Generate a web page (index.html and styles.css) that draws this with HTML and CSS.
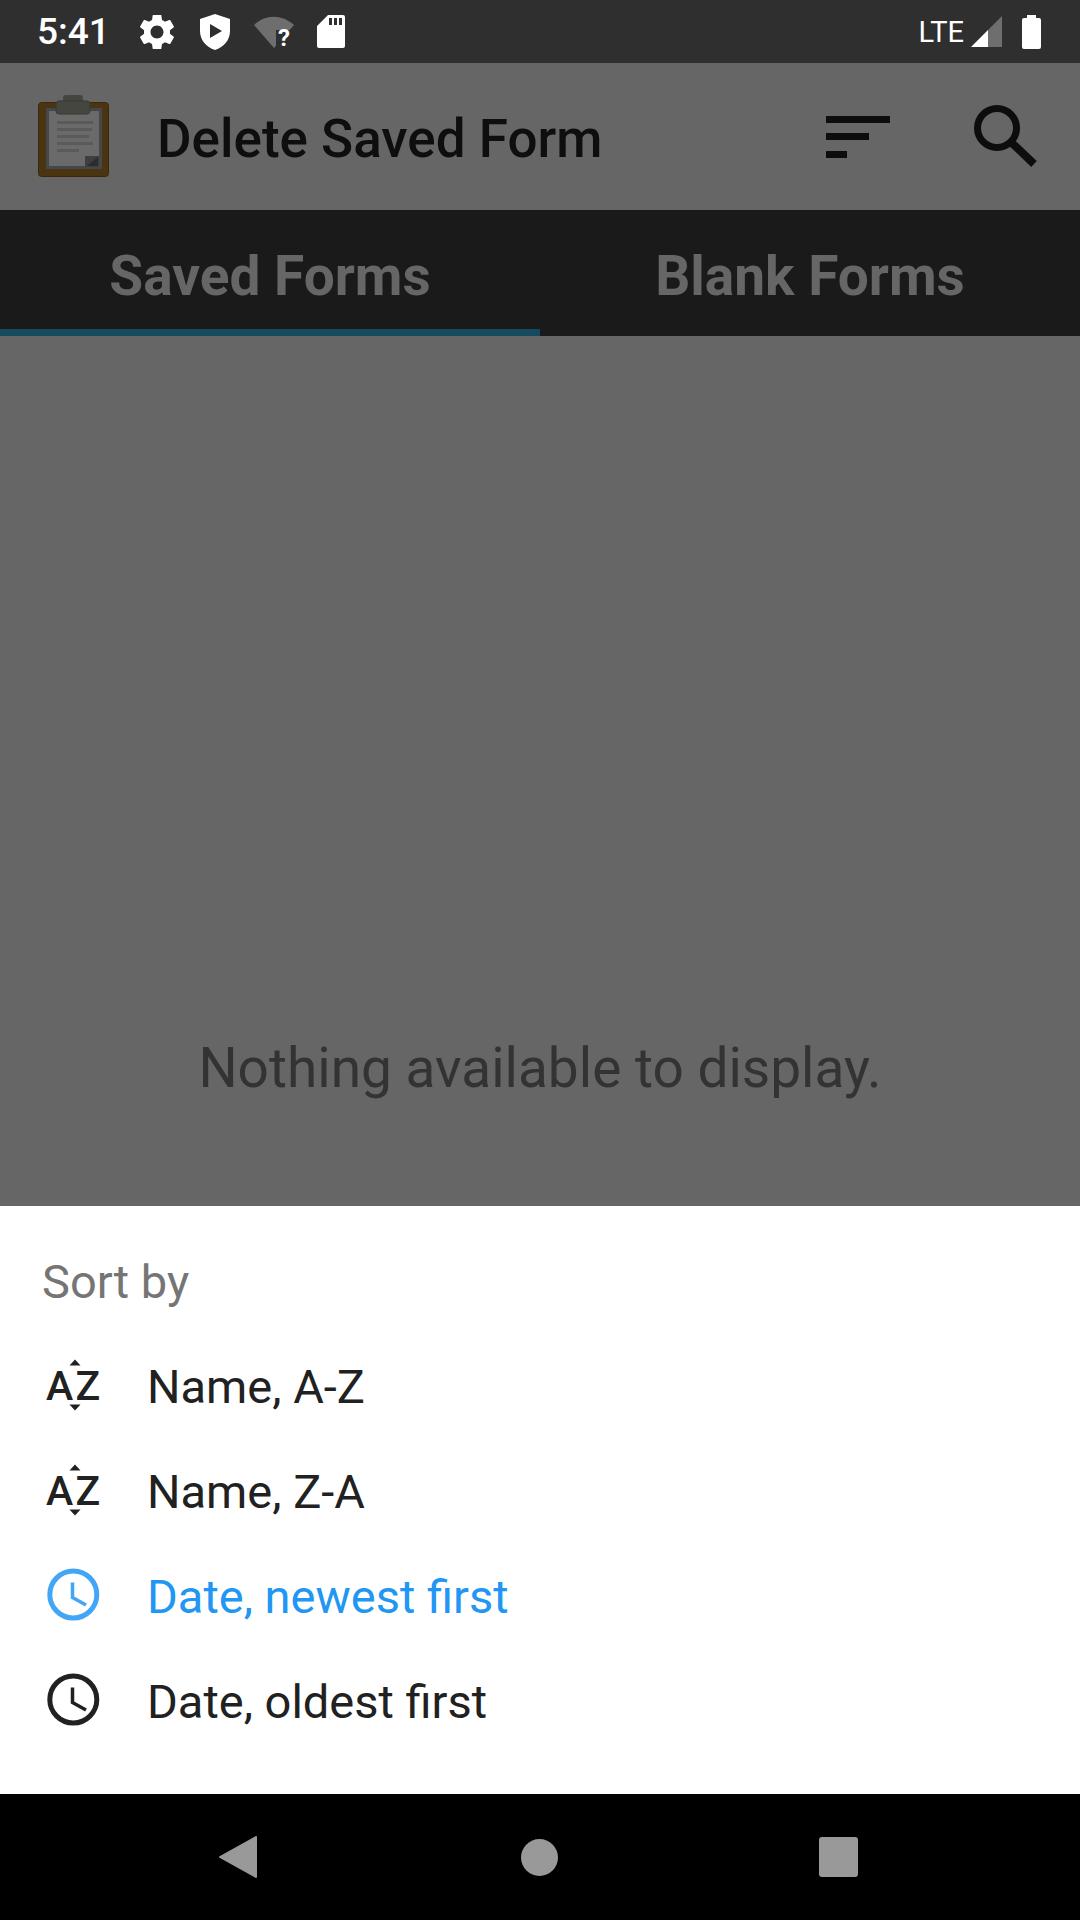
FILE: index.html
```html
<!DOCTYPE html>
<html lang="en">
<head>
    <meta charset="UTF-8">
    <meta name="viewport" content="width=device-width, initial-scale=1.0">
    <title>Delete Saved Form</title>
    <link rel="stylesheet" href="styles.css">
</head>
<body>
    <div class="screen">
        <div class="statusBar">
            <span class="time">5:41</span>
            <svg class="gear" viewBox="2.6 2.6 18.8 18.8"><path fill="#fff" d="M19.14 12.94c.04-.3.06-.61.06-.94 0-.32-.02-.64-.07-.94l2.03-1.58c.18-.14.23-.41.12-.61l-1.92-3.32c-.12-.22-.37-.29-.59-.22l-2.39.96c-.5-.38-1.03-.7-1.62-.94l-.36-2.54c-.04-.24-.24-.41-.48-.41h-3.84c-.24 0-.43.17-.47.41l-.36 2.54c-.59.24-1.13.57-1.62.94l-2.39-.96c-.22-.08-.47 0-.59.22L2.74 8.87c-.12.21-.08.47.12.61l2.03 1.58c-.05.3-.09.63-.09.94s.02.64.07.94l-2.03 1.58c-.18.14-.23.41-.12.61l1.92 3.32c.12.22.37.29.59.22l2.39-.96c.5.38 1.03.7 1.62.94l.36 2.54c.05.24.24.41.48.41h3.84c.24 0 .44-.17.47-.41l.36-2.54c.59-.24 1.13-.56 1.62-.94l2.39.96c.22.08.47 0 .59-.22l1.92-3.32c.12-.22.07-.47-.12-.61l-2.01-1.58zM12 15.6c-1.98 0-3.6-1.62-3.6-3.6s1.62-3.6 3.6-3.6 3.6 1.62 3.6 3.6-1.62 3.6-3.6 3.6z"/></svg>
            <svg class="shield" viewBox="0 0 30 36"><path fill="#fff" fill-rule="evenodd" d="M15 0L30 5V17C30 26 24 33 15 36C6 33 0 26 0 17V5ZM10 10V24L22 17Z"/></svg>
            <svg class="wifi" viewBox="0 0 40 42"><path fill="#6e6e6e" d="M0 14C11 3 28 3 40 14L20 37Z"/><path fill="#2f2f2f" d="M22 19H40V38H22Z"/><text x="24" y="35" class="wifiMark">?</text></svg>
            <svg class="sd" viewBox="0 0 28 33"><path fill="#fff" fill-rule="evenodd" d="M11 0H26Q28 0 28 2V31Q28 33 26 33H2Q0 33 0 31V11ZM12 3V10H15V3ZM17 3V10H20V3ZM22 3V10H25V3Z"/></svg>
            <span class="lte">LTE</span>
            <svg class="signal" viewBox="0 0 31 31"><path fill="#6e6e6e" d="M31 0V31H17V14Z"/><path fill="#fff" d="M17 14V31H0Z"/></svg>
            <svg class="battery" viewBox="0 0 19 34"><path fill="#fff" d="M5 0H14V3H17Q19 3 19 5V32Q19 34 17 34H2Q0 34 0 32V5Q0 3 2 3H5Z"/></svg>
        </div>

        <div class="toolbar">
            <svg class="logo" viewBox="0 0 72 82">
                <rect x="0.5" y="7.5" width="70" height="74" rx="3" fill="#4a3510" stroke="#38290e"/>
                <rect x="9.5" y="14.5" width="53" height="58" fill="#6a6a6a" stroke="#45484b" stroke-width="3"/>
                <rect x="25" y="0" width="20" height="10" rx="3" fill="#45463f"/>
                <rect x="18" y="6" width="34" height="13" rx="3" fill="#45463f" stroke="#38392f"/>
                <rect x="19" y="26" width="36" height="3" fill="#5a5a5a"/>
                <rect x="19" y="33" width="35" height="3" fill="#5a5a5a"/>
                <rect x="19" y="40" width="32" height="3" fill="#5a5a5a"/>
                <rect x="19" y="47" width="36" height="3" fill="#5a5a5a"/>
                <rect x="19" y="54" width="22" height="3" fill="#5a5a5a"/>
                <rect x="47" y="61" width="14" height="11" fill="#3f3f3f"/>
                <path d="M49 71L60 62V71Z" fill="#2c2c2c"/>
            </svg>
            <span class="screenTitle">Delete Saved Form</span>
            <svg class="sortIcon" viewBox="0 0 64 42"><path fill="#0d0d0d" d="M0 0H64V7H0ZM0 17H43V24H0ZM0 35H21V42H0Z"/></svg>
            <svg class="searchIcon" viewBox="0 0 68 68"><circle cx="25" cy="25" r="19.5" fill="none" stroke="#0d0d0d" stroke-width="7"/><path d="M40 40L62 61" stroke="#0d0d0d" stroke-width="8" fill="none"/></svg>
        </div>

        <div class="tabs">
            <div class="tab tabActive">Saved Forms</div>
            <div class="tab">Blank Forms</div>
        </div>

        <div class="content">
            <p class="emptyText">Nothing available to display.</p>
        </div>

        <div class="sheet">
            <div class="sheetTitle">Sort by</div>
            <div class="sortRow">
                <svg class="rowIcon" viewBox="0 0 60 60"><text x="0" y="42.5" class="azText">A</text><text x="29.5" y="42.5" class="azText">Z</text><path d="M23.5 8.5L29 2.5L34.5 8.5ZM23.5 47.5H34.5L29 53.5Z" fill="#212121"/></svg>
                <span>Name, A-Z</span>
            </div>
            <div class="sortRow">
                <svg class="rowIcon" viewBox="0 0 60 60"><text x="0" y="42.5" class="azText">A</text><text x="29.5" y="42.5" class="azText">Z</text><path d="M23.5 8.5L29 2.5L34.5 8.5ZM23.5 47.5H34.5L29 53.5Z" fill="#212121"/></svg>
                <span>Name, Z-A</span>
            </div>
            <div class="sortRow sortRowActive">
                <svg class="rowIcon" viewBox="0 0 60 60"><circle cx="27.3" cy="27.5" r="23.5" fill="none" stroke="#42a5f5" stroke-width="5"/><path d="M26.5 15.5V30.5L40 38" fill="none" stroke="#42a5f5" stroke-width="3.5"/></svg>
                <span>Date, newest first</span>
            </div>
            <div class="sortRow">
                <svg class="rowIcon" viewBox="0 0 60 60"><circle cx="27.3" cy="27.5" r="23.5" fill="none" stroke="#212121" stroke-width="5"/><path d="M26.5 15.5V30.5L40 38" fill="none" stroke="#212121" stroke-width="3.5"/></svg>
                <span>Date, oldest first</span>
            </div>
        </div>

        <div class="navBar">
            <svg class="navBack" viewBox="0 0 38 42"><path fill="#999" d="M37 1V41L1 21Z" stroke="#999" stroke-width="2" stroke-linejoin="round"/></svg>
            <div class="navHome"></div>
            <div class="navRecent"></div>
        </div>
    </div>
</body>
</html>
```

FILE: styles.css
```css
* {
    box-sizing: border-box;
}
body {
    margin: 0;
    font-family: Roboto, sans-serif;
    background-color: #666;
}
svg {
    display: block;
    flex: none;
}
.screen {
    width: 1080px;
    height: 1920px;
    display: flex;
    flex-direction: column;
    overflow: hidden;
}

.statusBar {
    height: 63px;
    background-color: #2f2f2f;
    display: flex;
    align-items: center;
    padding-left: 37px;
    color: #fff;
}
.time {
    font-size: 37px;
    font-weight: 500;
    width: 103px;
}
.gear {
    width: 34px;
    height: 34px;
}
.shield {
    width: 30px;
    height: 36px;
    margin-left: 26px;
}
.wifi {
    width: 40px;
    height: 42px;
    margin-left: 24px;
}
.wifiMark {
    font-family: Roboto, sans-serif;
    font-size: 24px;
    font-weight: 700;
    fill: #fff;
}
.sd {
    width: 28px;
    height: 33px;
    margin-left: 23px;
}
.lte {
    font-size: 29px;
    margin-left: auto;
    margin-right: 7px;
}
.signal {
    width: 31px;
    height: 31px;
}
.battery {
    width: 19px;
    height: 34px;
    margin-left: 20px;
    margin-right: 39px;
}

.toolbar {
    height: 147px;
    background-color: #666;
    display: flex;
    align-items: center;
    padding-left: 38px;
}
.logo {
    width: 72px;
    height: 82px;
    margin-bottom: 2px;
}
.screenTitle {
    font-size: 53px;
    font-weight: 500;
    color: #0e0e0e;
    margin-left: 47px;
    padding-top: 5px;
}
.sortIcon {
    width: 64px;
    height: 42px;
    margin-left: auto;
}
.searchIcon {
    width: 68px;
    height: 68px;
    margin-left: 82px;
    margin-right: 40px;
}

.tabs {
    height: 126px;
    background-color: #1a1a1a;
    display: flex;
}
.tab {
    flex: 1;
    display: flex;
    align-items: center;
    justify-content: center;
    font-size: 55px;
    font-weight: 700;
    color: #666;
    padding-top: 6px;
}
.tabActive {
    box-shadow: inset 0 -7px #154a5f;
}

.content {
    height: 870px;
    background-color: #666;
    display: flex;
    justify-content: center;
    padding-top: 700px;
}
.emptyText {
    margin: 0;
    font-size: 55px;
    color: #333;
}

.sheet {
    height: 588px;
    background-color: #fff;
    padding: 48px 0 0 42px;
}
.sheetTitle {
    font-size: 47px;
    color: #757575;
    height: 60px;
    margin-bottom: 20px;
}
.sortRow {
    height: 105px;
    display: flex;
    align-items: center;
    font-size: 47px;
    color: #212121;
}
.sortRowActive {
    color: #2196f3;
}
.rowIcon {
    width: 60px;
    height: 60px;
    margin-left: 4px;
    margin-right: 41px;
}
.azText {
    font-family: Roboto, sans-serif;
    font-size: 41px;
    font-weight: 500;
    fill: #212121;
}

.navBar {
    height: 126px;
    background-color: #000;
    display: flex;
    align-items: center;
    padding-left: 219px;
}
.navBack {
    width: 38px;
    height: 42px;
}
.navHome {
    width: 37px;
    height: 37px;
    border-radius: 50%;
    background-color: #999;
    margin-left: 264px;
}
.navRecent {
    width: 39px;
    height: 40px;
    border-radius: 3px;
    background-color: #999;
    margin-left: 261px;
}
```
